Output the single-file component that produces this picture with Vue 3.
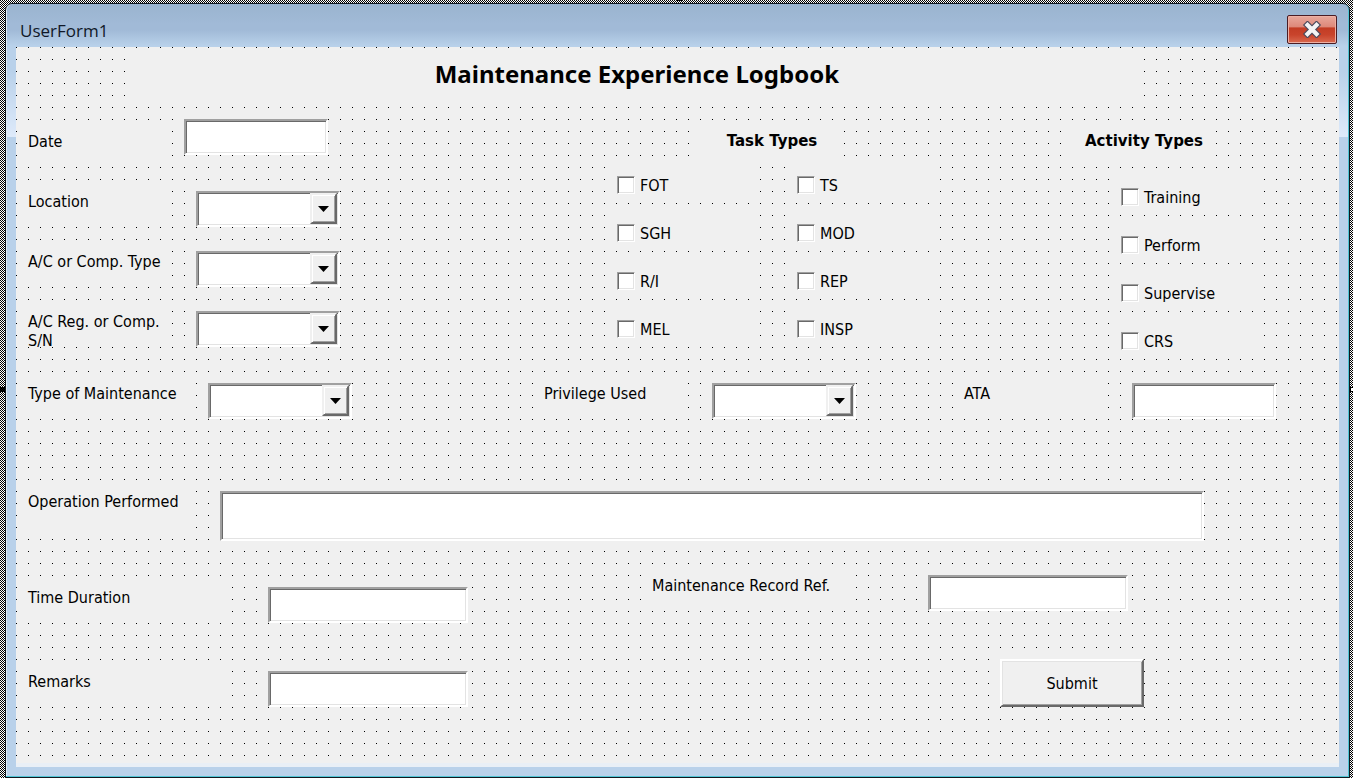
<script setup>
import { ref } from 'vue'

const combos = [
  { id: 'location', label: 'Location' },
  { id: 'comp-type', label: 'A/C or Comp. Type' },
  { id: 'comp-reg', label: 'A/C Reg. or Comp. S/N' },
]
const tasks = ['FOT', 'TS', 'SGH', 'MOD', 'R/I', 'REP', 'MEL', 'INSP']
const activities = ['Training', 'Perform', 'Supervise', 'CRS']
const checkedTasks = ref([])
const checkedActivities = ref([])
</script>

<template>
  <div class="designer">
    <i class="handle handle-top"></i>
    <i class="handle handle-left"></i>
    <i class="handle handle-right"></i>
    <main class="window">
      <header class="titlebar">
        <span class="caption">UserForm1</span>
        <button class="close" type="button" aria-label="Close">
          <svg width="20" height="17" viewBox="0 0 20 17">
            <path d="M5.500 4 L14.500 13 M14.500 4 L5.500 13" stroke="#4c4a5c" stroke-width="6.500" stroke-linecap="square" />
            <path d="M5.500 4 L14.500 13 M14.500 4 L5.500 13" stroke="#f4f4f4" stroke-width="4.200" stroke-linecap="square" />
          </svg>
        </button>
      </header>

      <form class="client" @submit.prevent>
        <h1 class="title">Maintenance Experience Logbook&nbsp;</h1>

        <div class="top">
          <div class="entries">
            <div class="entry entry-date">
              <label for="date">Date</label>
              <input id="date" class="box" type="text" />
            </div>
            <div v-for="c in combos" :key="c.id" class="entry">
              <label :for="c.id">{{ c.label }}</label>
              <div class="combo">
                <select :id="c.id" class="box"></select>
                <span class="drop"><svg width="11" height="6" viewBox="0 0 11 6"><path d="M0 0H11L5.500 6Z" /></svg></span>
              </div>
            </div>
          </div>

          <fieldset class="tasks">
            <legend class="heading">Task Types</legend>
            <div class="task-grid">
              <label v-for="t in tasks" :key="t" class="check">
                <input v-model="checkedTasks" type="checkbox" :value="t" />{{ t }}
              </label>
            </div>
          </fieldset>

          <fieldset class="activities">
            <legend class="heading">Activity Types</legend>
            <div class="activity-list">
              <label v-for="a in activities" :key="a" class="check">
                <input v-model="checkedActivities" type="checkbox" :value="a" />{{ a }}
              </label>
            </div>
          </fieldset>
        </div>

        <div class="middle">
          <div class="pair pair-type">
            <label for="maint-type">Type of Maintenance</label>
            <div class="combo">
              <select id="maint-type" class="box"></select>
              <span class="drop"><svg width="11" height="6" viewBox="0 0 11 6"><path d="M0 0H11L5.500 6Z" /></svg></span>
            </div>
          </div>
          <div class="pair">
            <label for="privilege">Privilege Used</label>
            <div class="combo">
              <select id="privilege" class="box"></select>
              <span class="drop"><svg width="11" height="6" viewBox="0 0 11 6"><path d="M0 0H11L5.500 6Z" /></svg></span>
            </div>
          </div>
          <div class="pair">
            <label for="ata">ATA</label>
            <input id="ata" class="box" type="text" />
          </div>
        </div>

        <div class="operation">
          <label for="operation">Operation Performed</label>
          <textarea id="operation" class="box"></textarea>
        </div>

        <div class="bottom">
          <div class="long low">
            <label for="duration">Time Duration</label>
            <input id="duration" class="box" type="text" />
          </div>
          <div class="long record">
            <label for="record">Maintenance Record Ref.</label>
            <input id="record" class="box" type="text" />
          </div>
          <div class="long low">
            <label for="remarks">Remarks</label>
            <input id="remarks" class="box" type="text" />
          </div>
          <button class="submit" type="submit">Submit</button>
        </div>
      </form>
    </main>
  </div>
</template>

<style>
body {
  margin: 0;
}
</style>

<style scoped>
* {
  box-sizing: border-box;
}

.designer {
  position: relative;
  display: flex;
  min-height: 100vh;
  padding: 3px 3px 0 5px;
  background:
    conic-gradient(from 270deg at 1px 1px, #000 25%, transparent 0) 0 0 / 2px 2px,
    conic-gradient(from 270deg at 1px 1px, #000 25%, transparent 0) 1px 1px / 2px 2px,
    #fff;
  font: 16px/19px "DejaVu Sans Condensed", "DejaVu Sans", sans-serif;
  color: #000;
}

.handle {
  position: absolute;
  width: 5px;
  height: 5px;
  background: #000;
}

.handle-top {
  top: -4px;
  left: 50%;
}

.handle-left {
  top: calc(50% - 2px);
  left: 0;
}

.handle-right {
  top: calc(50% - 2px);
  right: -2px;
  border: 1px solid #000;
  background: #fff;
  z-index: 1;
}

.window {
  flex: 1;
  display: flex;
  flex-direction: column;
  padding: 0 10px 10px;
  border: 1px solid #101820;
  border-radius: 7px 7px 0 0;
  box-shadow: inset -1px -1px #4fc4d4, inset 1px 0 #dfeaf5;
  background:
    linear-gradient(#9ab4cf, #a1bad7 20px, #a1bad7 26px, #b9d1ea 42px) 0 0 / 100% 43px no-repeat,
    linear-gradient(#b9d1ea, #b9d1ea 25px, #deeafa 90px) 0 43px / 100% 90px no-repeat,
    #b9d1ea;
}

.titlebar {
  display: flex;
  justify-content: space-between;
  height: 43px;
  padding: 11px 2px 0 4px;
}

.caption {
  padding-top: 4px;
  font: 17px/24px "Open Sans", "Noto Sans", sans-serif;
  color: #101828;
}

.close {
  display: flex;
  align-items: center;
  justify-content: center;
  width: 50px;
  height: 29px;
  padding: 0;
  border: 1px solid #4a1c24;
  border-radius: 2px;
  background: linear-gradient(#e8a89c, #dd8778 42%, #c23c24 43%, #c9442c 70%, #d96a50);
  box-shadow: inset 0 0 0 1px #eeb0a4;
}

.client {
  flex: 1;
  padding: 12px 0 60px;
  background:
    linear-gradient(#e9eff6, #e9eff6) 0 100% / 100% 4px no-repeat,
    conic-gradient(from 270deg at 1px 1px, #000 25%, #f0f0f0 0) 0 0 / 12px 12px;
}

label,
.title,
.heading {
  background: #f0f0f0;
}

label {
  padding-top: 1px;
}

.title {
  height: 48px;
  margin: 0 195px 0 120px;
  font: bold 24px/29px "Noto Sans", sans-serif;
  text-align: center;
}

.top {
  display: grid;
  grid-template-columns: 312px 276fr 324px 132fr 192px;
  margin-top: 12px;
  padding: 0 75px 0 12px;
}

.entries {
  display: grid;
  gap: 24px;
  align-content: start;
}

.entry {
  display: flex;
  justify-content: space-between;
}

.entry label {
  width: 144px;
  height: 36px;
}

.entry-date {
  height: 48px;
  padding-right: 12px;
}

.entry-date label {
  align-self: flex-end;
}

.box {
  display: block;
  appearance: none;
  width: 144px;
  height: 36px;
  margin: 0;
  padding: 2px 4px;
  border: 2px solid;
  border-color: #a0a0a0 #fff #fff #a0a0a0;
  border-radius: 0;
  outline: 0;
  background: #fff;
  box-shadow: inset 1px 1px #696969, inset -1px -1px #e3e3e3;
  font: inherit;
  resize: none;
}

.combo {
  position: relative;
}

.drop {
  position: absolute;
  top: 2px;
  right: 3px;
  bottom: 3px;
  display: flex;
  align-items: center;
  justify-content: center;
  width: 27px;
  border: 2px solid;
  border-color: #f0f0f0 #696969 #696969 #f0f0f0;
  background: #f0f0f0;
  box-shadow: inset 1px 1px #fff, inset -1px -1px #a0a0a0;
  pointer-events: none;
}

fieldset {
  min-width: 0;
  margin: 0;
  padding: 12px 0 0;
  border: 0;
}

.tasks {
  grid-column: 3;
}

.activities {
  grid-column: 5;
}

.heading {
  float: left;
  width: 144px;
  height: 36px;
  padding: 0;
  font: bold 15px/20px "DejaVu Sans", sans-serif;
  text-align: center;
}

.tasks .heading {
  margin-left: 84px;
}

.task-grid {
  clear: both;
  display: grid;
  grid-template-columns: 144px 144px;
  gap: 12px 36px;
}

.activity-list {
  clear: both;
  display: grid;
  gap: 12px;
  padding: 12px 0 0 48px;
}

.check {
  display: flex;
  align-items: center;
  gap: 5px;
  height: 36px;
  padding: 0 0 0 1px;
}

.check input {
  appearance: none;
  width: 18px;
  height: 18px;
  margin: 0;
  border: 1px solid;
  border-color: #a0a0a0 #fff #fff #a0a0a0;
  background: #fff;
  box-shadow: inset 1px 1px #696969, inset -1px -1px #e3e3e3;
}

.check input:checked {
  background: #fff radial-gradient(#000 4px, transparent 5px);
}

.middle {
  display: grid;
  grid-template-columns: 324px 192fr 312px 108fr 312px;
  margin-top: 24px;
  padding: 0 63px 0 12px;
}

.pair {
  display: flex;
  justify-content: space-between;
}

.pair:nth-child(2) {
  grid-column: 3;
}

.pair:nth-child(3) {
  grid-column: 5;
}

.pair label {
  width: 144px;
  height: 36px;
}

.pair-type label,
.operation label {
  width: 168px;
}

.operation {
  display: flex;
  gap: 24px;
  height: 48px;
  margin-top: 72px;
  padding: 0 135px 0 12px;
}

.operation .box {
  flex: 1;
  height: 50px;
}

.bottom {
  display: grid;
  grid-template-columns: 440px 184fr 492px;
  grid-template-rows: 48px 48px;
  row-gap: 36px;
  margin-top: 36px;
  padding: 0 195px 0 12px;
}

.long {
  display: flex;
  justify-content: space-between;
}

.long label {
  width: 204px;
  height: 36px;
}

.long .box {
  width: 200px;
}

.low {
  align-self: end;
}

.record {
  grid-column: 3;
  padding-right: 16px;
}

.submit {
  grid-column: 3;
  justify-self: end;
  width: 144px;
  padding: 0;
  border: 2px solid;
  border-color: #fff #696969 #696969 #fff;
  background: #f0f0f0;
  box-shadow: inset 1px 1px #e3e3e3, inset -1px -1px #a0a0a0;
  font: inherit;
  color: #000;
}
</style>
